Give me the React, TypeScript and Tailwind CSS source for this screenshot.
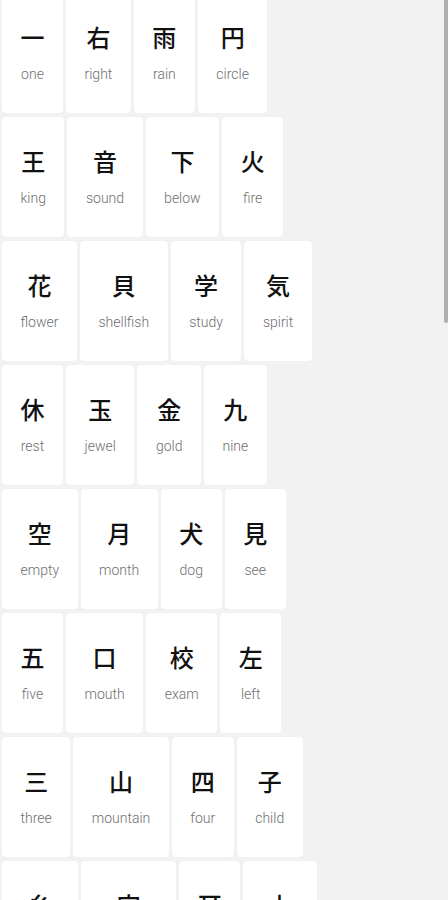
import React from 'react';

type Kanji = { char: string; meaning: string };

const ROWS: Kanji[][] = [
  [
    { char: '一', meaning: 'one' },
    { char: '右', meaning: 'right' },
    { char: '雨', meaning: 'rain' },
    { char: '円', meaning: 'circle' },
  ],
  [
    { char: '王', meaning: 'king' },
    { char: '音', meaning: 'sound' },
    { char: '下', meaning: 'below' },
    { char: '火', meaning: 'fire' },
  ],
  [
    { char: '花', meaning: 'flower' },
    { char: '貝', meaning: 'shellfish' },
    { char: '学', meaning: 'study' },
    { char: '気', meaning: 'spirit' },
  ],
  [
    { char: '休', meaning: 'rest' },
    { char: '玉', meaning: 'jewel' },
    { char: '金', meaning: 'gold' },
    { char: '九', meaning: 'nine' },
  ],
  [
    { char: '空', meaning: 'empty' },
    { char: '月', meaning: 'month' },
    { char: '犬', meaning: 'dog' },
    { char: '見', meaning: 'see' },
  ],
  [
    { char: '五', meaning: 'five' },
    { char: '口', meaning: 'mouth' },
    { char: '校', meaning: 'exam' },
    { char: '左', meaning: 'left' },
  ],
  [
    { char: '三', meaning: 'three' },
    { char: '山', meaning: 'mountain' },
    { char: '四', meaning: 'four' },
    { char: '子', meaning: 'child' },
  ],
  [
    { char: '糸', meaning: 'thread' },
    { char: '字', meaning: 'character' },
    { char: '耳', meaning: 'ear' },
    { char: '上', meaning: 'above' },
  ],
];

function KanjiCard({ item }: { item: Kanji }) {
  return (
    <div className="h-[120px] px-[18.5px] pt-[28px] bg-white rounded-[4px] shadow-[0_0_1px_rgba(0,0,0,0.06)] flex flex-col items-center">
      <span className="text-[24px] leading-[32px] font-medium text-[#111] font-['Noto_Sans_CJK_JP',sans-serif]">
        {item.char}
      </span>
      <span className="mt-[12px] text-[14px] leading-[18px] font-light text-[#6f6f6f] font-['Roboto',sans-serif] whitespace-nowrap">
        {item.meaning}
      </span>
    </div>
  );
}

export default function App() {
  return (
    <div className="relative h-[900px] w-[448px] overflow-hidden bg-[#f2f2f2]">
      {/* list scrolled a few px down */}
      <div className="-mt-[7px] pl-[2px] flex flex-col gap-[4px]">
        {ROWS.map((row, i) => (
          <div key={i} className="flex gap-[3px]">
            {row.map((item) => (
              <KanjiCard key={item.char} item={item} />
            ))}
          </div>
        ))}
      </div>

      {/* overlay scrollbar thumb */}
      <div className="absolute top-0 right-0 w-[4px] h-[323px] bg-[#b0b0b0] rounded-b-[2px]" />
    </div>
  );
}
